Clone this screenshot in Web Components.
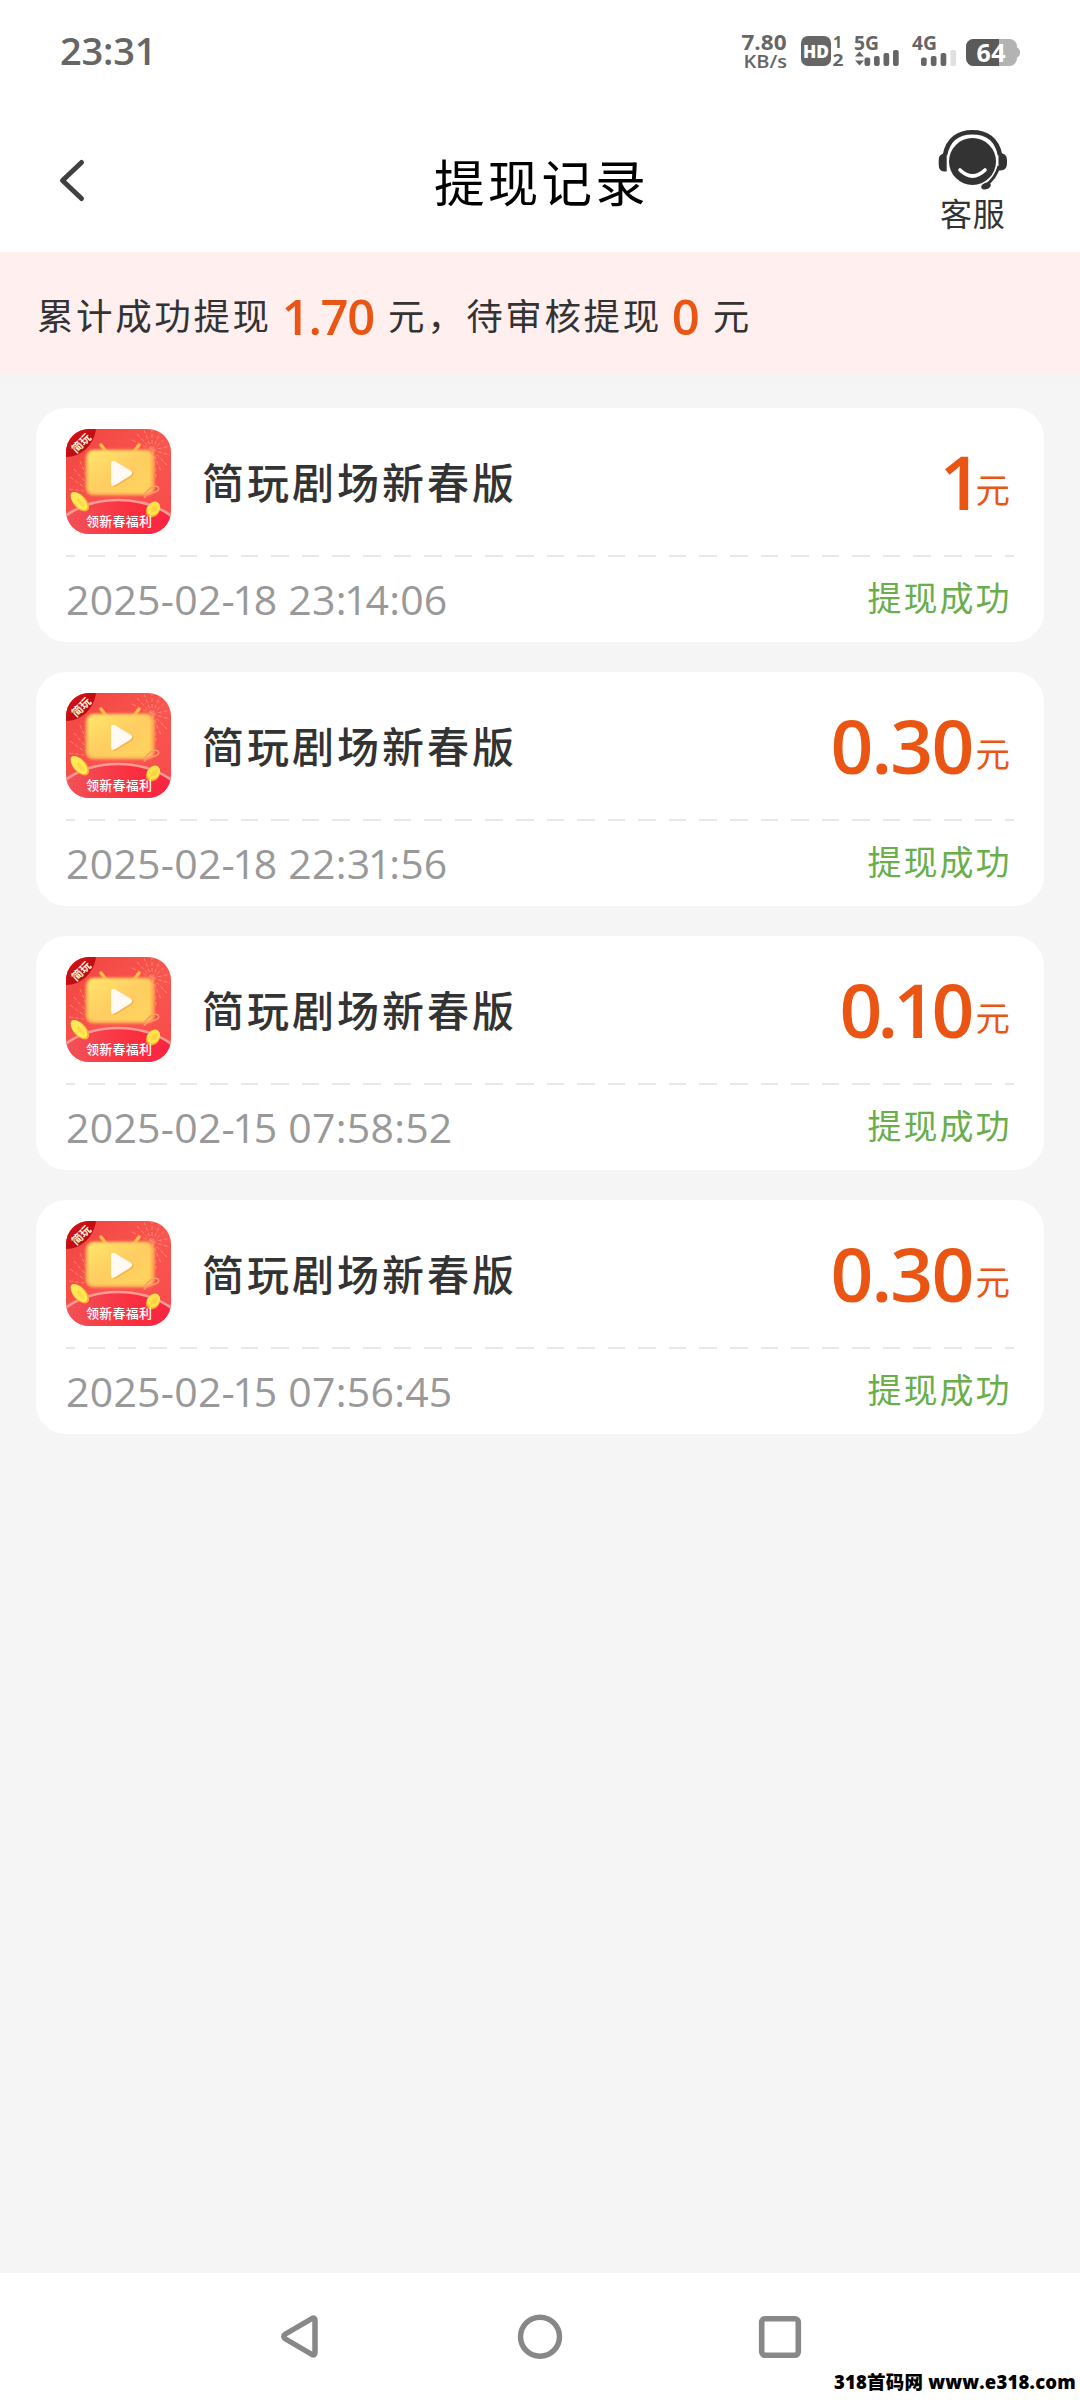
<!DOCTYPE html>
<html lang="zh-CN">
<head>
<meta charset="utf-8">
<title>提现记录</title>
<style>
html,body{margin:0;padding:0;background:#f5f5f5}
body{font-family:"Open Sans","Noto Sans CJK SC",sans-serif;color:#333}
</style>
</head>
<body>
<withdraw-page></withdraw-page>
<script>
const define = (name, html, setup) => customElements.define(name, class extends HTMLElement {
  connectedCallback() {
    if (this.shadowRoot) return;
    const t = document.createElement('template');
    t.innerHTML = html;
    this.attachShadow({mode: 'open'}).append(t.content.cloneNode(true));
    if (setup) setup(this, this.shadowRoot);
  }
});

define('status-bar', `
<style>
:host{display:flex;height:102px;box-sizing:border-box;padding:0 60px 3px;align-items:center;justify-content:space-between;color:#666;background:#fff}
.time{font-size:38px;line-height:50px;font-weight:600;letter-spacing:-.2px}
svg{display:block;overflow:visible;margin-top:3px}
text{font-family:"Open Sans",sans-serif;font-weight:700;fill:#666}
</style>
<div class="time">23:31</div>
<svg width="280" height="60" viewBox="740 21 280 60">
  <text x="741.500" y="49.500" font-size="20.500" textLength="45" lengthAdjust="spacingAndGlyphs">7.80</text>
  <text x="743.500" y="68" font-size="18" textLength="43.500" lengthAdjust="spacingAndGlyphs" style="font-weight:600">KB/s</text>
  <rect x="801" y="36" width="30" height="30" rx="7" fill="#666"/>
  <text x="803" y="57.500" font-size="17.500" textLength="26" lengthAdjust="spacingAndGlyphs" style="fill:#fff;font-weight:800">HD</text>
  <text x="833" y="48" font-size="16">1</text>
  <text x="832.500" y="65.500" font-size="16" textLength="11" lengthAdjust="spacingAndGlyphs">2</text>
  <text x="854" y="50" font-size="19" textLength="25" lengthAdjust="spacingAndGlyphs">5G</text>
  <path d="M859.500 51.500l4.500 5h-9zM859.500 65.500l-4.500-5h9z" fill="#666"/>
  <g fill="#666">
    <rect x="864.500" y="57.500" width="5.700" height="8.500" rx="2"/><rect x="874" y="56" width="5.700" height="10" rx="2"/>
    <rect x="883.500" y="53" width="5.700" height="13" rx="2"/><rect x="893" y="50" width="5.700" height="16" rx="2"/>
    <rect x="921" y="57.500" width="5.700" height="8.500" rx="2"/><rect x="930.800" y="56" width="5.700" height="10" rx="2"/>
    <rect x="940.600" y="53" width="5.700" height="13" rx="2"/><rect x="950.400" y="50" width="5.700" height="16" rx="2" fill="#e0e0e0"/>
  </g>
  <text x="912" y="50" font-size="19" textLength="25" lengthAdjust="spacingAndGlyphs">4G</text>
  <rect x="966" y="39" width="51" height="27" rx="7.500" fill="#b3b3b3"/>
  <path d="M999 39h-25.500a7.500 7.500 0 0 0-7.500 7.500v12a7.500 7.500 0 0 0 7.500 7.500h25.500z" fill="#5a5a5a"/>
  <path d="M1017 47.500q3 1 3 5t-3 5z" fill="#b3b3b3"/>
  <text x="976.500" y="61.500" font-size="25" textLength="29" style="fill:#fff">64</text>
</svg>`);

define('title-bar', `
<style>
:host{display:grid;grid-template-columns:138px 1fr 138px;height:150px;padding:0 40px;background:#fff}
.back{padding:56px 0 0 16px}
svg{display:block}
h1{margin:0;font-size:50.500px;line-height:70px;font-weight:400;letter-spacing:3.200px;color:#000;text-align:center;padding:46px 0 0 3px}
.help{width:70px;margin-left:36px;padding-top:26px}
.help span{display:block;margin:1px 0 0 2px;font-size:32px;line-height:40px;letter-spacing:.8px;white-space:nowrap}
</style>
<div class="back"><svg width="32" height="46" viewBox="56 158 32 46"><path d="M81.500 162.500L62.500 180.500L81.500 198.500" fill="none" stroke="#404040" stroke-width="5" stroke-linecap="round" stroke-linejoin="round"/></svg></div>
<h1><slot></slot></h1>
<div class="help">
<svg width="70" height="65" viewBox="0 0 70 65">
  <circle cx="34.500" cy="33.500" r="23.500" fill="#333"/>
  <path d="M22 42Q34.500 54 47 42" fill="none" stroke="#fff" stroke-width="3.600" stroke-linecap="round"/>
  <path d="M7 27C10 11 21 4.200 34.500 4.200S59 11 62 27" fill="none" stroke="#333" stroke-width="4.600"/>
  <path d="M61 38C58.500 48 54 53 47 58" fill="none" stroke="#333" stroke-width="3"/>
  <path d="M8.700 25v18.500q-8 1-8-7v-5q0-6 8-6.500zM60.500 25c6 0 8.500 2 8.500 7.500v2c0 7-3 8-8.500 8z" fill="#333"/>
  <ellipse cx="48" cy="58" rx="5" ry="3.300" transform="rotate(-20 48 58)" fill="#333"/>
</svg>
<span>客服</span></div>`);

define('summary-banner', `
<style>
:host{display:flex;align-items:center;height:125px;padding:3px 0 0 37px;background:linear-gradient(#ffefef 118px,#f5f4f2);font-size:36.500px;letter-spacing:2.600px;white-space:pre;line-height:60px;box-sizing:border-box}
::slotted(b){font-size:49px;font-weight:600;color:#ea5514;letter-spacing:-1.300px;line-height:60px;margin-right:2px;margin-left:-2px}
</style>
<slot></slot>`);

define('app-icon', `
<style>:host{display:block;width:105px;height:105px}svg{display:block}text{font-family:"Noto Sans CJK SC",sans-serif}</style>
<svg width="105" height="105" viewBox="0 0 105 105">
  <defs>
    <linearGradient id="bg" x1="0" y1="0" x2="1" y2="1"><stop offset="0" stop-color="#f0443f"/><stop offset=".55" stop-color="#fa5550"/><stop offset="1" stop-color="#f54a4a"/></linearGradient>
    <linearGradient id="tv" x1="0" y1="0" x2="1" y2="1"><stop offset="0" stop-color="#ffe66a"/><stop offset=".5" stop-color="#ffcd62"/><stop offset="1" stop-color="#ffd45c"/></linearGradient>
    <linearGradient id="hill" x1="0" y1="0" x2="1" y2="0"><stop offset="0" stop-color="#f0545a"/><stop offset=".6" stop-color="#fb3040"/><stop offset="1" stop-color="#fa2444"/></linearGradient>
    <linearGradient id="tag" x1="0" y1="0" x2="1" y2="1"><stop offset="0" stop-color="#dc1417"/><stop offset="1" stop-color="#aa0713"/></linearGradient>
    <clipPath id="r"><rect width="105" height="105" rx="23"/></clipPath>
    <filter id="s" x="-10%" y="-10%" width="120%" height="120%"><feGaussianBlur stdDeviation="1.200"/></filter>
  </defs>
  <g clip-path="url(#r)">
    <rect width="105" height="105" fill="url(#bg)"/>
    <g fill="none" stroke="#ffaa80" stroke-width="1" stroke-dasharray="4 2" opacity=".6">
      <path d="M86 21L64 10M86 21L70 4M86 21L78 1M86 21V0M86 21L95 2M86 21L102 7M86 21L105 17M86 21L104 26M86 21L101 36M86 21L95 42M86 21L90 48"/>
      <path d="M8 40L20 54M4 48L18 58M3 60L18 62M14 32L20 46"/>
    </g>
    <path d="M35 16l6 8M73 16l-6 8" stroke="#ffbd4c" stroke-width="3.500" stroke-linecap="round"/>
    <rect x="19.500" y="20.500" width="69" height="46" rx="8" fill="#ffae55" filter="url(#s)"/>
    <rect x="22" y="22" width="63" height="42" rx="6" fill="url(#tv)" filter="url(#s)"/>
    <path d="M78 66q8-11 14-8q3 4-6 6q-6 1-8 5" fill="none" stroke="#ff9868" stroke-width="1.500"/>
    <path d="M45.500 35q0-5 4.500-2.500l15 9q3.500 2.500 0 5l-15 9.500q-4.500 2.500-4.500-2z" fill="#e69a38" opacity=".5" transform="translate(1 1)"/>
    <path d="M45 35q0-5 4.500-2.500l15 9q3.500 2.500 0 5l-15 9.500q-4.500 2.500-4.500-2z" fill="#fffaf4"/>
    <path d="M-2 88Q20 71 52 71T107 88V107H-2z" fill="url(#hill)"/>
    <path d="M-2 88Q20 71 52 71T107 88" fill="none" stroke="#ff9a94" stroke-width="2.600"/>
    <ellipse cx="14" cy="73" rx="11.500" ry="6.500" transform="rotate(48 14 73)" fill="#ffa53c"/>
    <ellipse cx="13" cy="72" rx="11" ry="5.500" transform="rotate(48 13 72)" fill="#ffec55"/>
    <ellipse cx="14.500" cy="73.500" rx="5.500" ry="2" transform="rotate(48 14.500 73.500)" fill="#ffd84c"/>
    <ellipse cx="87" cy="81" rx="8" ry="6.500" transform="rotate(-50 87 81)" fill="#ffa430"/>
    <ellipse cx="87.500" cy="79.500" rx="7.500" ry="6" transform="rotate(-50 87.500 79.500)" fill="#ffe34b"/>
    <ellipse cx="88" cy="80" rx="3.500" ry="2.500" transform="rotate(-50 88 80)" fill="#ffd044"/>
    <text x="20" y="97" font-size="13" font-weight="500" fill="#fff" textLength="66">领新春福利</text>
    <path d="M0 0H30C28 16 15 28 0 28z" fill="url(#tag)"/>
    <text x="0" y="0" font-size="11" font-weight="700" fill="#fff4dc" text-anchor="middle" transform="translate(18 17) rotate(-45)">简玩</text>
  </g>
</svg>`);

define('record-card', `
<style>
:host{display:block;height:234px;box-sizing:border-box;padding:21px 30px 0;background:#fff;border-radius:30px}
.top{display:flex;height:105px;align-items:center}
.name{margin-left:31px;flex:1;font-size:42px;line-height:60px;letter-spacing:3px;font-weight:500;padding-top:3px}
.amount{display:flex;align-items:center;color:#ea5514}
.amount b{font-size:75px;line-height:90px;font-weight:600;letter-spacing:-1.800px;margin:-2px -1px 0 0}
.amount b.tight{letter-spacing:-4.800px;margin-right:2px}
.amount b.single{margin-right:-9px}
.amount .unit{font-size:34.500px;line-height:50px;margin:16px 4px 0 4px}
.dash{height:2px;margin-top:21px;background:repeating-linear-gradient(90deg,#e8e8e8 0 8.800px,transparent 8.800px 21.800px,#e8e8e8 21.800px 30.580px)}
.foot{display:flex;height:85px;align-items:center;justify-content:space-between}
.date{font-size:41px;line-height:60px;color:#999;letter-spacing:.25px;padding-bottom:1px}
.date .one{margin:0 -2.500px}
.state{font-size:34px;line-height:50px;letter-spacing:2px;color:#6aae4b;padding:0 2.500px 4px 0}
</style>
<div class="top"><app-icon></app-icon><div class="name"><slot></slot></div>
<div class="amount"><b></b><span class="unit">元</span></div></div>
<div class="dash"></div>
<div class="foot"><div class="date"></div><div class="state">提现成功</div></div>`,
(host, root) => {
  // The figure 1 is narrow, so amounts that hold it are set tighter.
  const amount = host.getAttribute('amount');
  const b = root.querySelector('b');
  b.textContent = amount;
  b.className = amount.length === 1 ? 'single' : amount.includes('1') ? 'tight' : '';
  root.querySelector('.date').innerHTML =
    host.getAttribute('date').replace(/1/g, '<span class="one">1</span>');
});

define('nav-bar', `
<style>
:host{display:flex;height:127px;background:#fff;flex-direction:column}
.keys{display:flex;justify-content:space-between;padding:39px 276px 0;height:51px}
svg{display:block}
.mark{align-self:flex-end;margin:6px 4px 0 0;color:#000;font-size:18.500px;letter-spacing:.2px;font-weight:800;line-height:26px;white-space:pre}
</style>
<div class="keys">
<svg width="50" height="50" viewBox="0 0 50 50"><path d="M36 6.500q3-1.500 3 2v32q0 3.500-3 2L9.500 27q-3.500-2.500 0-5z" fill="none" stroke="#888" stroke-width="5.500" stroke-linejoin="round"/></svg>
<svg width="50" height="50" viewBox="0 0 50 50"><circle cx="25" cy="24.700" r="19.500" fill="none" stroke="#888" stroke-width="5.500"/></svg>
<svg width="50" height="50" viewBox="0 0 50 50"><rect x="7.700" y="6.700" width="36.600" height="36.600" rx="3.500" fill="none" stroke="#888" stroke-width="5.600"/></svg>
</div>
<div class="mark">318首码网 www.e318.com</div>`);

define('withdraw-page', `
<style>
:host{display:flex;flex-direction:column;width:1080px;height:2400px;background:#f5f5f5}
main{flex:1;display:flex;flex-direction:column;gap:30px;padding:31px 36px 0}
</style>
<status-bar></status-bar>
<title-bar>提现记录</title-bar>
<summary-banner>累计成功提现 <b>1.70</b> 元，待审核提现 <b>0</b> 元</summary-banner>
<main>
<record-card amount="1" date="2025-02-18 23:14:06">简玩剧场新春版</record-card>
<record-card amount="0.30" date="2025-02-18 22:31:56">简玩剧场新春版</record-card>
<record-card amount="0.10" date="2025-02-15 07:58:52">简玩剧场新春版</record-card>
<record-card amount="0.30" date="2025-02-15 07:56:45">简玩剧场新春版</record-card>
</main>
<nav-bar></nav-bar>`);
</script>
</body>
</html>
